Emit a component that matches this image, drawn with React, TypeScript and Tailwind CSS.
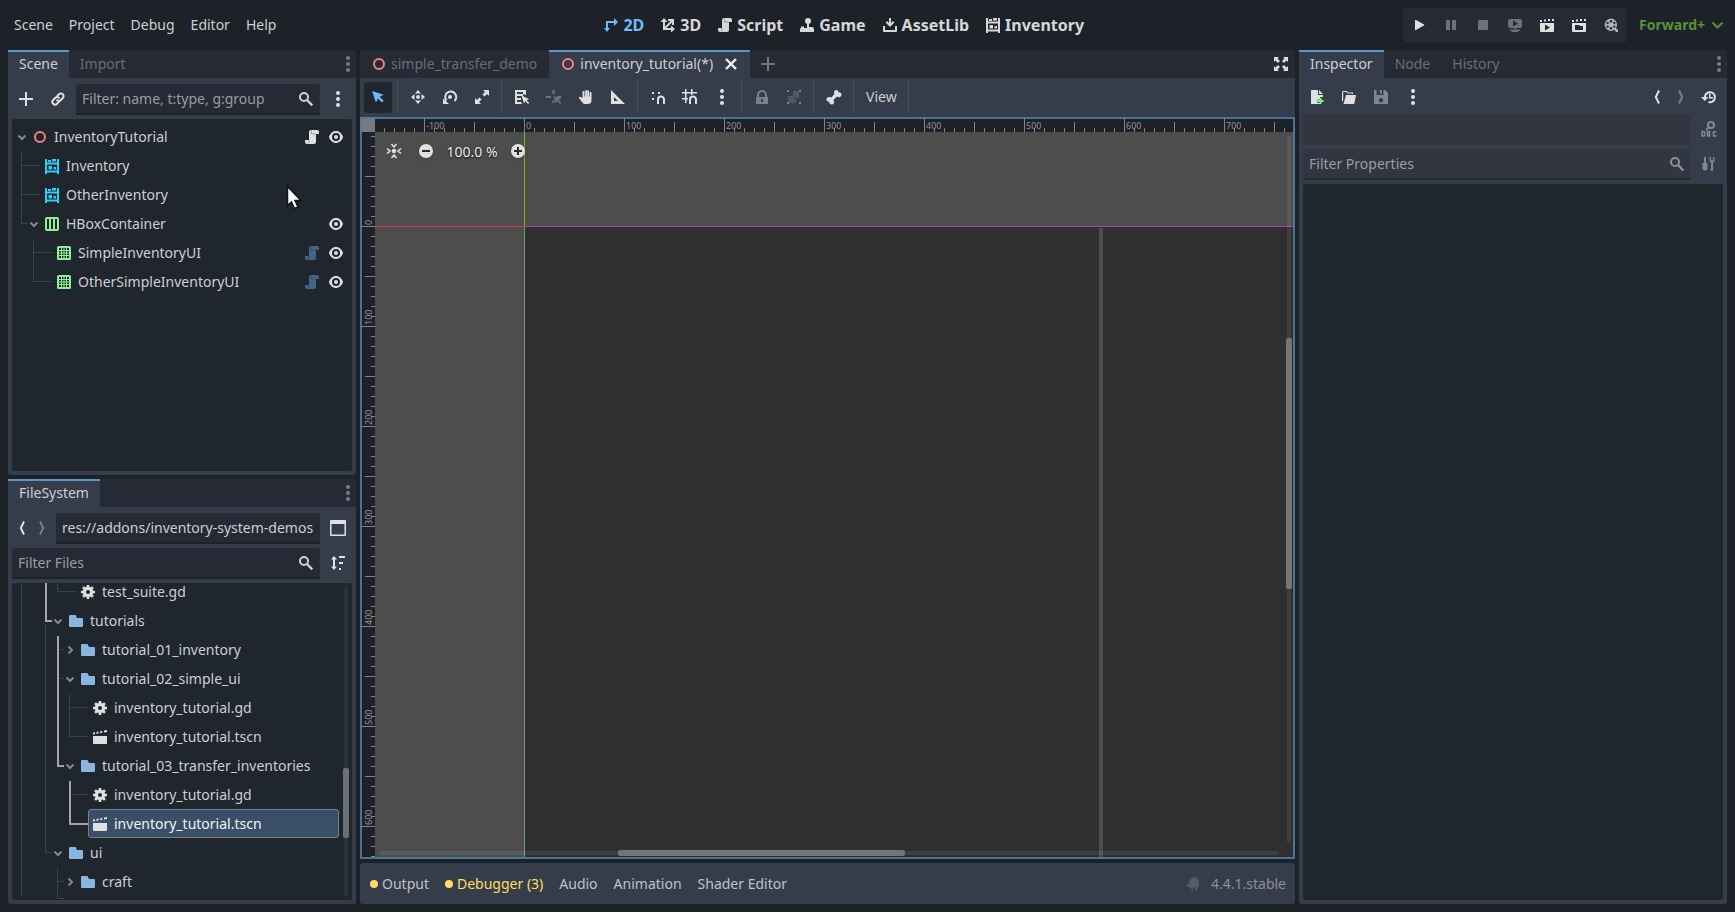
import { useEffect, useRef, useState } from "react";
import clsx from "clsx";

type IconProps = { className?: string };

type SvgProps = IconProps & { children: React.ReactNode };

function Svg({ className = "text-[#e0e0e0]", children }: SvgProps) {
  return (
    <svg
      width="16"
      height="16"
      viewBox="0 0 16 16"
      fill="currentColor"
      className={clsx("shrink-0", className)}
      aria-hidden
    >
      {children}
    </svg>
  );
}

/* ---------- icons ---------- */

const DotsIcon = (p: IconProps) => (
  <Svg {...p}>
    <circle cx="8" cy="2" r="2" />
    <circle cx="8" cy="8" r="2" />
    <circle cx="8" cy="14" r="2" />
  </Svg>
);

const PlusIcon = (p: IconProps) => (
  <Svg {...p}>
    <path d="M7 1h2v6h6v2H9v6H7V9H1V7h6z" />
  </Svg>
);

const LinkIcon = (p: IconProps) => (
  <Svg {...p}>
    <g fill="none" stroke="currentColor" strokeWidth="2" strokeLinecap="round">
      <path d="M7.2 5.2 9 3.2a2.6 2.6 0 0 1 3.8 3.8L10.6 9.2a2.5 2.5 0 0 1-3.4 0" />
      <path d="M8.8 10.8 7 12.8A2.6 2.6 0 0 1 3.2 9l2.2-2.2a2.5 2.5 0 0 1 3.4 0" />
    </g>
  </Svg>
);

const SearchIcon = (p: IconProps) => (
  <Svg {...p}>
    <g fill="none" stroke="currentColor" strokeWidth="2">
      <circle cx="6" cy="6" r="4" />
      <path d="m9 9 5.3 5.3" strokeWidth="2.4" />
    </g>
  </Svg>
);

const ArrowDownIcon = (p: IconProps) => (
  <Svg {...p}>
    <path d="m4.5 6.5 3.5 3.5 3.5-3.5" fill="none" stroke="currentColor" strokeWidth="2" />
  </Svg>
);

const ArrowRightIcon = (p: IconProps) => (
  <Svg {...p}>
    <path d="M6.5 4.5 10 8l-3.500 3.500" fill="none" stroke="currentColor" strokeWidth="2" />
  </Svg>
);

const NodeIcon = () => (
  <Svg className="text-[#fc7f7f]">
    <circle cx="8" cy="8" r="5" fill="none" stroke="currentColor" strokeWidth="2" />
  </Svg>
);

const ScriptIcon = (p: IconProps) => (
  <Svg {...p}>
    <path d="M7 1a2 2 0 0 0-2 2v8H1v2a2 2 0 0 0 2 2h7a2 2 0 0 0 2-2V5h3V3a2 2 0 0 0-2-2z" />
    <path
      d="M7.500 1.500v3.500H12M5 11v2a1 1 0 0 1-1 1"
      fill="none"
      stroke="#20262d"
      strokeOpacity=".35"
      strokeWidth="1"
    />
  </Svg>
);

const EyeIcon = (p: IconProps) => (
  <Svg {...p}>
    <path d="M8 2C5.443 2 2.209 3.948 1.045 7.705a1 1 0 0 0-.006.57C2.163 12.022 5.481 14 8 14s5.837-1.978 6.961-5.725a1 1 0 0 0 0-.55C13.861 3.935 10.557 2 8 2zm0 2a4 4 0 0 1 0 8 4 4 0 0 1 0-8zm0 2a2 2 0 0 0 0 4 2 2 0 0 0 0-4z" />
  </Svg>
);

const ShelfIcon = (p: IconProps) => (
  <Svg {...p}>
    <path d="M1 1h2v3.5h10V1h2v15h-2v-1.5H3V16H1zm2 5.5v6h10v-6z" fillRule="evenodd" />
    <path d="M4 2h3v2H4zM8 1h4v2.5H8zM4.5 8H8v3.5H4.5zM9.5 9H12v2.5H9.5z" />
  </Svg>
);

const HBoxIcon = () => (
  <Svg className="text-[#8eef97]">
    <path
      fillRule="evenodd"
      d="M3 1a2 2 0 0 0-2 2v10a2 2 0 0 0 2 2h10a2 2 0 0 0 2-2V3a2 2 0 0 0-2-2zm0 2h2v10H3zm4 0h2v10H7zm4 0h2v10h-2z"
    />
  </Svg>
);

const GridIcon = () => (
  <Svg className="text-[#8eef97]">
    <rect x="1" y="1" width="14" height="14" rx="1.5" />
    <rect x="3" y="3" width="10" height="10" fill="#20262d" />
    <path d="M5 3h1v10H5zM7.500 3h1v10h-1zM10 3h1v10h-1zM3 5h10v1H3zM3 7.500h10v1H3zM3 10h10v1H3z" />
  </Svg>
);

const FolderIcon = () => (
  <Svg className="text-[#8ab5df]">
    <path d="M1 3a1 1 0 0 1 1-1h5a1 1 0 0 1 1 1l1 2h5a1 1 0 0 1 1 1v7a1 1 0 0 1-1 1H2a1 1 0 0 1-1-1z" />
  </Svg>
);

const GearIcon = () => (
  <Svg>
    {[0, 45, 90, 135].map((a) => (
      <path key={a} d="M6.8 1h2.400l.4 3v8l-.4 3H6.800l-.4-3V4z" transform={`rotate(${a} 8 8)`} />
    ))}
    <circle cx="8" cy="8" r="5" />
    <circle cx="8" cy="8" r="2" fill="#20262d" />
  </Svg>
);

const SceneIcon = () => (
  <Svg>
    <path d="M1 3.600 3 3.200v2L1 5.600zM4.500 2.900l2-.4v2l-2 .4zM8.200 2.200l2-.4v2l-2 .4zM12 1.500l3-.5v2l-3 .6z" />
    <path d="M1 7h14v7a1 1 0 0 1-1 1H2a1 1 0 0 1-1-1z" />
  </Svg>
);

const PlaySceneIcon = () => (
  <Svg>
    <path d="M1 3h2v2H1zM5 2.500h2v2H5zM9 2h2v2H9zM13 2h2v2h-2z" />
    <path fillRule="evenodd" d="M1 6h14v8a1 1 0 0 1-1 1H2a1 1 0 0 1-1-1zm5 1.500v6l5-3z" />
  </Svg>
);

const PlayCustomIcon = () => (
  <Svg>
    <path d="M1 3h2v2H1zM5 2.500h2v2H5zM9 2h2v2H9zM13 2h2v2h-2z" />
    <path fillRule="evenodd" d="M1 6h14v8a1 1 0 0 1-1 1H2a1 1 0 0 1-1-1zm3 2v5h8V9H9L8 8z" />
  </Svg>
);

const PlayIcon = () => (
  <Svg>
    <path d="M4 3.500v9.200a.6.6 0 0 0 1 .3l8-4.400a.6.6 0 0 0 0-1L5 3a.6.6 0 0 0-1 .5z" />
  </Svg>
);

const PauseIcon = (p: IconProps) => (
  <Svg {...p}>
    <path d="M3 3h4v10H3zM9 3h4v10H9z" />
  </Svg>
);

const StopIcon = (p: IconProps) => (
  <Svg {...p}>
    <rect x="3" y="3" width="10" height="10" rx="1" />
  </Svg>
);

const RemoteIcon = (p: IconProps) => (
  <Svg {...p}>
    <path
      fillRule="evenodd"
      d="M3 2a2 2 0 0 0-2 2v5a2 2 0 0 0 2 2h10a2 2 0 0 0 2-2V4a2 2 0 0 0-2-2zm3 1.500v6l5-3z"
    />
    <path d="M7 11h2v1H7zM3 12.500h10V14H3zM5 14h6v1H5z" />
  </Svg>
);

const MovieIcon = (p: IconProps) => (
  <Svg {...p}>
    <path
      fillRule="evenodd"
      d="M8 1.500a6.200 6.200 0 1 0 3.500 11.300L13 15h2v-2l-2-2A6.200 6.200 0 0 0 8 1.500z"
    />
    <g fill="#262a34">
      <circle cx="8" cy="4.200" r="1.300" />
      <circle cx="8" cy="11.200" r="1.300" />
      <circle cx="4.600" cy="6" r="1.200" />
      <circle cx="11.300" cy="6" r="1.200" />
      <circle cx="4.600" cy="9.600" r="1.200" />
      <circle cx="11.300" cy="9.600" r="1.200" />
    </g>
  </Svg>
);

const View2DIcon = (p: IconProps) => (
  <Svg {...p}>
    <path d="M3 4h8V1l4 4-4 4V6H5v5h2l-3 4-3-4h2z" />
  </Svg>
);

const View3DIcon = (p: IconProps) => (
  <Svg {...p}>
    <path d="m4 1 3.500 4H5v4.600L10.600 4H8V2h6v6h-2V5.400L6.400 11H11V8.500l4 3.500-4 3.500V13H3V5H.5z" />
  </Svg>
);

const GameIcon = (p: IconProps) => (
  <Svg {...p}>
    <circle cx="9" cy="4" r="3" />
    <path d="M8 6h2v4h3a2 2 0 0 1 2 2v3H1v-3a1 1 0 0 1 1-1V9.500h3V11h3z" />
  </Svg>
);

const AssetLibIcon = (p: IconProps) => (
  <Svg {...p}>
    <path d="M7 1h2v5l2-2 1.400 1.400L8 10 3.600 5.400 5 4l2 2zM1 9h2v4h10V9h2v5a1 1 0 0 1-1 1H2a1 1 0 0 1-1-1z" />
  </Svg>
);

const SelectIcon = (p: IconProps) => (
  <Svg {...p}>
    <path d="m2 2 4 11.500 2-4 4 4 1.700-1.700-4-4 4-2z" />
  </Svg>
);

const MoveIcon = () => (
  <Svg>
    <circle cx="8" cy="8" r="2" />
    <path d="m8 1 3 3.500H5zM8 15l3-3.500H5zM1 8l3.500-3v6zM15 8l-3.500-3v6z" />
  </Svg>
);

const RotateIcon = () => (
  <Svg>
    <path d="M4.500 11.500A5.500 5.500 0 1 1 12.500 12" fill="none" stroke="currentColor" strokeWidth="2" />
    <circle cx="8" cy="8" r="2" />
    <path d="M1 9.500V15h6z" />
  </Svg>
);

const ScaleIcon = () => (
  <Svg>
    <path d="M9 1h6v6l-2-2-2.500 2.500-2-2L11 3zM7 15H1V9l2 2 2.500-2.500 2 2L5 13z" />
  </Svg>
);

const ListSelectIcon = () => (
  <Svg>
    <path fillRule="evenodd" d="M1 1h11v5l-3-1V3H3v2h6v2H3v2h4v2H3v2h4l1 2H1z" />
    <path d="m7.500 6.500 2.500 8 1.500-2.500 2.500 3 1.300-1.300-2.800-2.500 2.500-1.200z" />
  </Svg>
);

const PivotIcon = (p: IconProps) => (
  <Svg {...p}>
    <path d="M6.500 1h2v4h-2zM0 7h5v2H0zM11 7h4v2h-4zM6.500 11h2v3h-2z" />
    <path d="m7.500 7 2.500 7.500 1.500-2.500 2.500 3 1.300-1.300-2.800-2.500 2.500-1.200z" />
  </Svg>
);

const PanIcon = () => (
  <Svg>
    <path d="M8.200 1c-.6 0-1 .4-1 1v5.500h-.7V3c0-1.300-2-1.300-2 0v6.300L2.800 8C1.800 7.200.4 8.500 1.300 9.600L5 14.200c.5.5 1 .8 2 .8h3c2 0 3.500-1.500 3.500-3.500V4c0-1.300-2-1.300-2 0v3.500h-.5V2.300c0-1.400-1.800-1.400-1.800 0v5.200h-.2V2c0-.6-.3-1-.8-1z" />
  </Svg>
);

const RulerIcon = () => (
  <Svg>
    <path fillRule="evenodd" d="M1 1v14h14zm3 7 4 4H4z" />
  </Svg>
);

const Magnet = () => (
  <path d="M8 15v-4.500a3 3 0 0 1 6 0V15" fill="none" stroke="currentColor" strokeWidth="2" />
);

const SmartSnapIcon = () => (
  <Svg>
    <path d="M2 3h2v2H2zM8 3h2v2H8zM2 9h2v2H2z" />
    <Magnet />
  </Svg>
);

const GridSnapIcon = () => (
  <Svg>
    <path d="M3 0h1.500v3H9V0h1.500v3H15v1.500h-4.500V6H9V4.500H4.500V9H6v1.500H4.500V14H3v-3.500H0V9h3V4.500H0V3h3z" />
    <Magnet />
  </Svg>
);

const LockIcon = (p: IconProps) => (
  <Svg {...p}>
    <path
      fillRule="evenodd"
      d="M8 1a5 5 0 0 0-5 5v2H2v7h12V8h-1V6a5 5 0 0 0-5-5zm0 2a3 3 0 0 1 3 3v2H5V6a3 3 0 0 1 3-3zM7 10h2v3H7z"
    />
  </Svg>
);

const GroupIcon = (p: IconProps) => (
  <Svg {...p}>
    <path d="M1 1h2v2H1zM13 1h2v2h-2zM1 13h2v2H1zM13 13h2v2h-2z" />
    <path d="M7 2h6v7H9V7H7zM2 7h6v3h2v4H2z" opacity=".4" />
  </Svg>
);

const BoneIcon = () => (
  <Svg>
    <path d="M10.500 1a2.400 2.400 0 0 0-2.300 3.200L8.300 5.300 5.300 8.400l-1.200-.1a2.400 2.400 0 1 0-.8 4.400 2.400 2.400 0 1 0 4.400-.8l-.1-1.200 3.100-3 1.100.1a2.400 2.400 0 1 0 .8-4.400A2.400 2.400 0 0 0 10.500 1z" />
  </Svg>
);

const ExpandIcon = () => (
  <Svg>
    <path d="M1 1h5L4.500 2.500l2.500 2.500-2 2-2.500-2.500L1 6zM15 1v5l-1.500-1.500L11 7 9 5l2.500-2.500L10 1zM1 15v-5l1.500 1.500L5 9l2 2-2.500 2.500L6 15zM15 15h-5l1.500-1.500L9 11l2-2 2.500 2.500L15 10z" />
  </Svg>
);

const CloseIcon = () => (
  <Svg className="text-[#f2f2f2]">
    <path d="m3 3 10 10M13 3 3 13" stroke="currentColor" strokeWidth="2.400" />
  </Svg>
);

const BackIcon = (p: IconProps) => (
  <Svg {...p}>
    <path d="M10 1.500 6.800 8l3.200 6.500" fill="none" stroke="currentColor" strokeWidth="2" />
  </Svg>
);

const ForwardIcon = (p: IconProps) => (
  <Svg {...p}>
    <path d="M6 1.500 9.200 8 6 14.500" fill="none" stroke="currentColor" strokeWidth="2" />
  </Svg>
);

const PanelIcon = () => (
  <Svg>
    <path
      fillRule="evenodd"
      d="M1 0h14a1 1 0 0 1 1 1v14a1 1 0 0 1-1 1H1a1 1 0 0 1-1-1V1a1 1 0 0 1 1-1zm.5 4v10.500h13V4z"
    />
  </Svg>
);

const SortIcon = () => (
  <Svg>
    <path d="m4 1 3 3.500H5v7h2L4 15l-3-3.500h2v-7H1zM9 1h6v2H9zM9 7h4v2H9zM9 13h2v2H9z" />
  </Svg>
);

const NewResourceIcon = () => (
  <Svg>
    <path d="M2 1h7v5h5v2h-3v2.500H8.500v3.500H11v1H2z" />
    <path d="M10 1v4h4z" />
    <path d="M10.500 9h2v2h2v2h-2v2h-2v-2h-2v-2h2z" fill="#7df580" />
  </Svg>
);

const OpenFolderIcon = () => (
  <Svg>
    <path d="M2 2h4l1 1.500h5V5h-1V4.500H6.500l-1-1.500H2.200v8L1 13V3z" />
    <path d="M5 6h10l-1.500 8a1 1 0 0 1-1 1H2.500z" />
  </Svg>
);

const SaveIcon = (p: IconProps) => (
  <Svg {...p}>
    <path
      fillRule="evenodd"
      d="M2 1a1 1 0 0 0-1 1v12a1 1 0 0 0 1 1h12a1 1 0 0 0 1-1V4l-3-3zm1.500 0v5h7V1H9v3.500H7V1zM8 9a2.200 2.200 0 0 0 0 4.400A2.200 2.200 0 0 0 8 9z"
    />
  </Svg>
);

const HistoryIcon = () => (
  <Svg>
    <path d="M4 10V7.500a5 5 0 1 1 3.500 5.500" fill="none" stroke="currentColor" strokeWidth="2" />
    <path d="M0 8h7.500L3.800 12zM8 4.500h1.500V8H12v1.500H8z" />
  </Svg>
);

const DocIcon = (p: IconProps) => (
  <Svg {...p}>
    <g fill="none" stroke="currentColor">
      <circle cx="10" cy="4" r="3" strokeWidth="2" />
      <path d="M7.800 6.200 5 9" strokeWidth="2" />
      <path
        d="M1 10.500V15h1.200a1.500 1.500 0 0 0 1.500-1.500V12a1.500 1.500 0 0 0-1.500-1.500zM6.500 10.500h2V15h-2zM15.500 10.800h-3V15h3"
        strokeWidth="1.600"
      />
    </g>
  </Svg>
);

const ToolsIcon = (p: IconProps) => (
  <Svg {...p}>
    <path d="M3 1h2v6h1.500v5a2.500 2.500 0 0 1-5 0V7H3zM9 1h1v3.500h2V1h1.500v3.500a3 3 0 0 1-1.500 2.300V15h-2V6.800A3 3 0 0 1 8.500 4.500V1z" />
  </Svg>
);

const BellIcon = (p: IconProps) => (
  <Svg {...p}>
    <path d="M9 1a5 5 0 0 0-4 3L3.500 8 1 9.500l4 2.500 9-.5V9l-.5-5A5 5 0 0 0 9 1zM6 12.500l.5 2h1.500l.5-2zM10 12l.5 2h1.500l.5-2z" />
  </Svg>
);

const CenterIcon = () => (
  <Svg>
    <circle cx="8" cy="8" r="2.200" />
    <g fill="none" stroke="currentColor" strokeWidth="1.600">
      <path d="M5.500 1 8 4l2.500-3M5.500 15 8 12l2.500 3M1 5.500 4 8l-3 2.500M15 5.500 12 8l3 2.500" />
    </g>
  </Svg>
);

function ZoomIcon({ plus }: { plus?: boolean }) {
  return (
    <Svg className="text-[#e0e0e0] drop-shadow-sm">
      <circle cx="8" cy="8" r="7" />
      <path d={plus ? "M7 4h2v3h3v2H9v3H7V9H4V7h3z" : "M4 7h8v2H4z"} fill="#2b2b2b" />
    </Svg>
  );
}

/* ---------- shared bits ---------- */

type IconButtonProps = {
  label: string;
  active?: boolean;
  className?: string;
  children: React.ReactNode;
};

function IconButton({ label, active, className = "w-7", children }: IconButtonProps) {
  return (
    <button
      type="button"
      aria-label={label}
      className={clsx(
        "flex h-[31px] shrink-0 items-center justify-center rounded-[3px] pb-px",
        className,
        active && "bg-[#21262e]",
      )}
    >
      {children}
    </button>
  );
}

type TabProps = { label: string; active?: boolean; onClick?: () => void };

function DockTab({ label, active, onClick }: TabProps) {
  return (
    <button
      type="button"
      role="tab"
      aria-selected={!!active}
      onClick={onClick}
      className={clsx(
        "h-7 border-t-2 px-[11px] pb-0.5",
        active ? "border-[#5a94c8] bg-[#363d4a] text-[#cdcfd2]" : "border-transparent text-[#6b6e75]",
      )}
    >
      {label}
    </button>
  );
}

function DockTabs({ tabs }: { tabs: string[] }) {
  const [current, setCurrent] = useState(tabs[0]);
  return (
    <div role="tablist" className="flex h-7 shrink-0 rounded-t-[3px] bg-[#262a34]">
      {tabs.map((tab) => (
        <DockTab key={tab} label={tab} active={tab === current} onClick={() => setCurrent(tab)} />
      ))}
      <button type="button" aria-label="Dock options" className="ml-auto w-4">
        <DotsIcon className="text-[#7b7d82]" />
      </button>
    </div>
  );
}

type FieldProps = {
  label: string;
  value?: string;
  placeholder?: string;
  search?: boolean;
  muted?: boolean;
  disabled?: boolean;
};

function Field({ label, value, placeholder, search, muted, disabled }: FieldProps) {
  return (
    <label
      className={clsx(
        "flex h-[31px] min-w-0 flex-1 items-center rounded-t-[3px] px-1.5",
        muted ? "bg-[#313641]" : "bg-[#262a34]",
        disabled ? "rounded-b-[3px]" : muted ? "border-b-2 border-[#262a34]" : "border-b-2 border-[#1d2229]",
      )}
    >
      <input
        type="text"
        aria-label={label}
        defaultValue={value}
        placeholder={placeholder}
        disabled={disabled}
        className="w-full min-w-0 bg-transparent text-[#cdcfd2] outline-none placeholder:text-[#9a9da3]"
      />
      {search && <SearchIcon className={muted ? "text-[#8e9197]" : "text-[#d0d1d3]"} />}
    </label>
  );
}

/* ---------- top bar ---------- */

const menus = ["Scene", "Project", "Debug", "Editor", "Help"];

const screens = [
  { label: "2D", icon: View2DIcon },
  { label: "3D", icon: View3DIcon },
  { label: "Script", icon: ScriptIcon },
  { label: "Game", icon: GameIcon },
  { label: "AssetLib", icon: AssetLibIcon },
  { label: "Inventory", icon: ShelfIcon },
];

function TopBar() {
  const [screen, setScreen] = useState("2D");
  return (
    <header className="flex h-[50px] shrink-0 items-center justify-between pr-2.5 pl-1.5">
      <nav className="flex" aria-label="Main menu">
        {menus.map((menu) => (
          <button key={menu} type="button" className="px-2 text-[#cdcfd2]">
            {menu}
          </button>
        ))}
      </nav>
      <div className="flex">
        {screens.map(({ label, icon: Icon }) => {
          const color = screen === label ? "text-[#70bafa]" : "text-[#d6d7d9]";
          return (
            <button
              key={label}
              type="button"
              onClick={() => setScreen(label)}
              className={clsx("flex items-center gap-1 px-2 text-base font-bold", color)}
            >
              <Icon className={color} />
              {label}
            </button>
          );
        })}
      </div>
      <div className="flex items-center">
        <div className="flex h-[34px] items-center gap-1 rounded-[3px] bg-[#262a34] px-0.5">
          <IconButton label="Run project"><PlayIcon /></IconButton>
          <IconButton label="Pause"><PauseIcon className="text-[#6e7177]" /></IconButton>
          <IconButton label="Stop"><StopIcon className="text-[#6e7177]" /></IconButton>
          <IconButton label="Remote deploy"><RemoteIcon className="text-[#6e7177]" /></IconButton>
          <IconButton label="Run current scene"><PlaySceneIcon /></IconButton>
          <IconButton label="Run specific scene"><PlayCustomIcon /></IconButton>
          <IconButton label="Movie maker"><MovieIcon className="text-[#b4b6b9]" /></IconButton>
        </div>
        <button type="button" className="flex items-center gap-1 pl-3 font-bold text-[#5b8f3d]">
          Forward+
          <svg width="16" height="16" viewBox="0 0 16 16" fill="none" stroke="currentColor" strokeWidth="2" aria-hidden>
            <path d="m3.500 5.500 5 5 5-5" />
          </svg>
        </button>
      </div>
    </header>
  );
}

/* ---------- scene dock ---------- */

type SceneNode = {
  name: string;
  icon: React.ReactNode;
  indent: string;
  arrow?: boolean;
  script?: string;
  eye?: boolean;
};

const sceneNodes: SceneNode[] = [
  { name: "InventoryTutorial", icon: <NodeIcon />, indent: "pl-[2px]", arrow: true, script: "text-[#e0e0e0]", eye: true },
  { name: "Inventory", icon: <ShelfIcon className="text-[#2fd0f5]" />, indent: "pl-[14px]" },
  { name: "OtherInventory", icon: <ShelfIcon className="text-[#2fd0f5]" />, indent: "pl-[14px]" },
  { name: "HBoxContainer", icon: <HBoxIcon />, indent: "pl-[14px]", arrow: true, eye: true },
  { name: "SimpleInventoryUI", icon: <GridIcon />, indent: "pl-[26px]", script: "text-[#42658a]", eye: true },
  { name: "OtherSimpleInventoryUI", icon: <GridIcon />, indent: "pl-[26px]", script: "text-[#42658a]", eye: true },
];

function SceneDock() {
  return (
    <section className="flex min-h-0 flex-1 flex-col rounded-[3px] bg-[#363d4a]">
      <DockTabs tabs={["Scene", "Import"]} />
      <div className="flex min-h-0 flex-1 flex-col gap-1 px-1 pt-1.5 pb-1">
        <div className="flex gap-1">
          <IconButton label="Add node"><PlusIcon /></IconButton>
          <IconButton label="Instantiate scene"><LinkIcon /></IconButton>
          <Field label="Filter nodes" placeholder="Filter: name, t:type, g:group" search />
          <IconButton label="More options"><DotsIcon /></IconButton>
        </div>
        <div className="relative min-h-0 flex-1 overflow-hidden rounded-[3px] bg-[#20262d] py-[3px]">
          <svg className="absolute top-0 left-0" width="60" height="180" fill="none" stroke="#3d4249" aria-hidden>
            <path d="M9.500 33v71.500M9.500 46.500H28M9.500 75.500H28M9 104.500h7" />
            <path d="M21.500 120v42.500M21.500 133.500H40M21 162.500h19" />
          </svg>
          <ul>
            {sceneNodes.map((node) => (
              <li key={node.name} className={clsx("flex h-[29px] items-center pr-2", node.indent)}>
                <span className="flex w-[18px] shrink-0">
                  {node.arrow && <ArrowDownIcon className="text-[#86898e]" />}
                </span>
                {node.icon}
                <span className="ml-1.5 flex-1 text-[#cdcfd2]">{node.name}</span>
                {node.script && (
                  <button type="button" aria-label={`Open script of ${node.name}`}>
                    <ScriptIcon className={node.script} />
                  </button>
                )}
                {node.eye && (
                  <button type="button" aria-label={`Toggle visibility of ${node.name}`} className="ml-2">
                    <EyeIcon />
                  </button>
                )}
              </li>
            ))}
          </ul>
          <svg className="absolute top-[66px] left-[274px]" width="18" height="26" viewBox="0 0 18 26" aria-hidden>
            <path
              d="M1.500 1.500v19l4-3.500 3 6.500 3.500-1.500-3-6.500h6z"
              fill="#fff"
              stroke="#11141c"
              strokeWidth="1.500"
            />
          </svg>
        </div>
      </div>
    </section>
  );
}

/* ---------- filesystem dock ---------- */

type FileRow = {
  name: string;
  kind: "folder" | "script" | "scene";
  indent: string;
  open?: boolean;
  selected?: boolean;
};

const files: FileRow[] = [
  { name: "test_suite.gd", kind: "script", indent: "pl-[50px]" },
  { name: "tutorials", kind: "folder", indent: "pl-[38px]", open: true },
  { name: "tutorial_01_inventory", kind: "folder", indent: "pl-[50px]", open: false },
  { name: "tutorial_02_simple_ui", kind: "folder", indent: "pl-[50px]", open: true },
  { name: "inventory_tutorial.gd", kind: "script", indent: "pl-[62px]" },
  { name: "inventory_tutorial.tscn", kind: "scene", indent: "pl-[62px]" },
  { name: "tutorial_03_transfer_inventories", kind: "folder", indent: "pl-[50px]", open: true },
  { name: "inventory_tutorial.gd", kind: "script", indent: "pl-[62px]" },
  { name: "inventory_tutorial.tscn", kind: "scene", indent: "pl-[58px]", selected: true },
  { name: "ui", kind: "folder", indent: "pl-[38px]", open: true },
  { name: "craft", kind: "folder", indent: "pl-[50px]", open: false },
];

const fileIcons = {
  folder: <FolderIcon />,
  script: <GearIcon />,
  scene: <SceneIcon />,
};

function FileTree() {
  return (
    <div className="relative min-h-0 flex-1 overflow-hidden rounded-[3px] bg-[#20262d]">
      <svg className="absolute top-0 left-0" width="90" height="316" fill="none" aria-hidden>
        <g stroke="#3d4249">
          <path d="M9.500 0v313M33.500 41v228.500h6.500M45.500 0v8.500H64" />
          <path d="M49 66.500h3M49 95.500h3M57.500 111v42.500H76M57.500 124.500H76M61 211.500h15" />
          <path d="M45.500 285v30.500H52M45.500 298.500H52" />
        </g>
        <g stroke="#a3a5a8" strokeWidth="2">
          <path d="M34 0v38h6M46 53v130h6M58 198v43h18" />
        </g>
      </svg>
      <ul className="-mt-1.5">
        {files.map((file, i) => (
          <li key={i} className={clsx("flex h-[29px] items-center pr-[13px]", file.indent)}>
            <span className="flex w-[18px] shrink-0">
              {file.open === true && <ArrowDownIcon className="text-[#86898e]" />}
              {file.open === false && <ArrowRightIcon className="text-[#86898e]" />}
            </span>
            <span
              className={clsx(
                "flex flex-1 items-center gap-1.5",
                file.selected
                  ? "h-[29px] rounded-[3px] border border-[#7a808a] bg-[#394f67] pl-[3px] text-[#f0f1f2]"
                  : "text-[#cdcfd2]",
              )}
            >
              {fileIcons[file.kind]}
              {file.name}
            </span>
          </li>
        ))}
      </ul>
      <div className="absolute inset-y-1 right-1 w-1 rounded-full bg-[#2d3239]" />
      <div className="absolute top-[185px] right-[3px] h-[70px] w-1.5 rounded-[2px] bg-[#6b6f76]" />
    </div>
  );
}

function FileSystemDock() {
  return (
    <section className="flex min-h-0 flex-1 flex-col rounded-[3px] bg-[#363d4a]">
      <DockTabs tabs={["FileSystem"]} />
      <div className="flex min-h-0 flex-1 flex-col gap-1 px-1 pt-1.5 pb-1">
        <div className="flex">
          <IconButton label="Previous folder" className="w-5"><BackIcon /></IconButton>
          <IconButton label="Next folder" className="mr-1 w-5"><ForwardIcon className="text-[#7b7f87]" /></IconButton>
          <Field label="Path" value="res://addons/inventory-system-demos" />
          <IconButton label="Change split mode" className="ml-1 w-7"><PanelIcon /></IconButton>
        </div>
        <div className="flex gap-1">
          <Field label="Filter files" placeholder="Filter Files" search />
          <IconButton label="Sort files"><SortIcon /></IconButton>
        </div>
        <FileTree />
      </div>
    </section>
  );
}

/* ---------- 2D viewport ---------- */

const ORIGIN_X = 149;
const ORIGIN_Y = 94;

// every 10 units that fall inside a ruler of the given length
function ticks(origin: number, length: number) {
  const out: number[] = [];
  for (let n = -Math.floor(origin / 10) * 10; n + origin < length; n += 10) out.push(n);
  return out;
}

function tickLength(n: number) {
  if (n % 100 === 0) return 15;
  return n % 50 === 0 ? 10 : 4;
}

function useSize() {
  const ref = useRef<HTMLDivElement>(null);
  const [size, setSize] = useState({ width: 0, height: 0 });

  useEffect(() => {
    const el = ref.current;
    if (!el) return;
    const update = () => setSize({ width: el.clientWidth, height: el.clientHeight });
    update();
    const observer = new ResizeObserver(update);
    observer.observe(el);
    return () => observer.disconnect();
  }, []);

  return { ref, size };
}

function HorizontalRuler({ length }: { length: number }) {
  return (
    <svg className="h-[15px] w-full bg-[#1d2229]" fill="#80848b" aria-hidden>
      {ticks(ORIGIN_X, length).map((n) => (
        <g key={n}>
          <rect x={n + ORIGIN_X} y={15 - tickLength(n)} width="1" height={tickLength(n)} />
          {n % 100 === 0 && (
            <text x={n + ORIGIN_X + 2} y="12" fontSize="9" fill="#8f9298">
              {n}
            </text>
          )}
        </g>
      ))}
    </svg>
  );
}

function VerticalRuler({ length }: { length: number }) {
  return (
    <svg className="h-full w-[15px] bg-[#1d2229]" fill="#80848b" aria-hidden>
      {ticks(ORIGIN_Y, length).map((n) => (
        <g key={n}>
          <rect x={15 - tickLength(n)} y={n + ORIGIN_Y} width={tickLength(n)} height="1" />
          {n % 100 === 0 && (
            <text transform={`translate(12 ${n + ORIGIN_Y - 1}) rotate(-90)`} fontSize="9" fill="#8f9298">
              {n}
            </text>
          )}
        </g>
      ))}
    </svg>
  );
}

function Viewport() {
  const { ref, size } = useSize();
  return (
    <div className="relative grid min-h-0 flex-1 grid-cols-[15px_minmax(0,1fr)] grid-rows-[15px_minmax(0,1fr)]">
      <div className="bg-[#777a83]" />
      <HorizontalRuler length={size.width} />
      <div className="relative overflow-hidden bg-[#1d2229]">
        <div className="absolute inset-0">
          <VerticalRuler length={size.height} />
        </div>
      </div>
      <div ref={ref} className="relative overflow-hidden bg-[#4d4d4d]">
        <div className="absolute top-[95px] right-0 bottom-0 left-[150px] bg-[#2f2f2f]" />
        <div className="absolute top-[96px] bottom-0 left-[724px] w-1 bg-[#4d4d4d]" />
        <div className="absolute top-0 left-[149px] h-[94px] w-px bg-[#80b01c]" />
        <div className="absolute top-[95px] bottom-0 left-[149px] w-px bg-[#6f9a74]" />
        <div className="absolute top-[94px] left-0 h-px w-[149px] bg-[#dc3550]" />
        <div className="absolute top-[94px] right-0 left-[149px] h-px bg-[#ac429e]" />
        <div className="absolute top-1 left-[5px] flex items-center">
          <IconButton label="Center view"><CenterIcon /></IconButton>
          <IconButton label="Zoom out" className="ml-1 w-7"><ZoomIcon /></IconButton>
          <button
            type="button"
            className="w-16 text-center text-[#ebebeb] [text-shadow:0_0_2px_#222,0_1px_2px_#222]"
          >
            100.0 %
          </button>
          <IconButton label="Zoom in"><ZoomIcon plus /></IconButton>
        </div>
        <div className="absolute top-1 right-1 bottom-4 w-1 rounded-full bg-white/8" />
        <div className="absolute top-[206px] right-[3px] h-[251px] w-1.5 rounded-[2px] bg-[#757575]" />
        <div className="absolute right-4 bottom-1 left-1 h-1 rounded-full bg-white/8" />
        <div className="absolute bottom-[3px] left-[243px] h-1.5 w-[287px] rounded-[2px] bg-[#757575]" />
      </div>
      <div className="pointer-events-none absolute inset-0 border-2 border-[#4f7ba3]/90" />
    </div>
  );
}

const Separator = () => <div className="mx-px h-[31px] w-0.5 shrink-0 border-l border-[#4a505c]" />;

function ViewportToolbar() {
  return (
    <div className="flex h-[39px] shrink-0 gap-1 bg-[#363d4a] p-1">
      <IconButton label="Select mode" active><SelectIcon className="text-[#70bafa]" /></IconButton>
      <Separator />
      <IconButton label="Move mode"><MoveIcon /></IconButton>
      <IconButton label="Rotate mode"><RotateIcon /></IconButton>
      <IconButton label="Scale mode"><ScaleIcon /></IconButton>
      <Separator />
      <IconButton label="List selectable nodes"><ListSelectIcon /></IconButton>
      <IconButton label="Change pivot"><PivotIcon className="text-[#70747d]" /></IconButton>
      <IconButton label="Pan mode"><PanIcon /></IconButton>
      <IconButton label="Ruler mode"><RulerIcon /></IconButton>
      <Separator />
      <IconButton label="Smart snap"><SmartSnapIcon /></IconButton>
      <IconButton label="Grid snap"><GridSnapIcon /></IconButton>
      <IconButton label="Snapping options"><DotsIcon /></IconButton>
      <Separator />
      <IconButton label="Lock"><LockIcon className="text-[#7b7f87]" /></IconButton>
      <IconButton label="Group"><GroupIcon className="text-[#7b7f87]" /></IconButton>
      <Separator />
      <IconButton label="Skeleton options"><BoneIcon /></IconButton>
      <Separator />
      <button type="button" className="h-[31px] px-1.5 pb-0.5 text-[#cdcfd2]">View</button>
      <Separator />
    </div>
  );
}

function SceneTabs() {
  return (
    <div className="flex h-7 shrink-0 items-center rounded-t-[3px] bg-[#262a34]">
      <button type="button" className="flex h-7 items-center gap-1 pr-3 pl-[11px] text-[#6b6e75]">
        <NodeIcon />
        simple_transfer_demo
      </button>
      <div className="flex h-7 items-center border-t-2 border-[#5a94c8] bg-[#363d4a] px-[11px] pb-0.5">
        <button type="button" className="flex items-center gap-1 text-[#cdcfd2]">
          <NodeIcon />
          inventory_tutorial(*)
        </button>
        <button type="button" aria-label="Close tab" className="ml-2.5">
          <CloseIcon />
        </button>
      </div>
      <button type="button" aria-label="New scene" className="ml-2.5">
        <PlusIcon className="text-[#75767a]" />
      </button>
      <button type="button" aria-label="Distraction free mode" className="mr-1.5 ml-auto">
        <ExpandIcon />
      </button>
    </div>
  );
}

function BottomPanel() {
  const dot = <span className="size-2 rounded-full bg-[#ffdd65]" />;
  return (
    <footer className="mt-1 flex h-[41px] shrink-0 items-center rounded-[3px] bg-[#363d4a] px-0.5 text-[#bfc2c7]">
      <button type="button" className="flex items-center gap-1 px-2">{dot}Output</button>
      <button type="button" className="flex items-center gap-1 px-2 text-[#ffdd65]">{dot}Debugger (3)</button>
      <button type="button" className="px-2">Audio</button>
      <button type="button" className="px-2">Animation</button>
      <button type="button" className="px-2">Shader Editor</button>
      <button type="button" aria-label="Notifications" className="ml-auto">
        <BellIcon className="text-[#565b65]" />
      </button>
      <button type="button" className="ml-1 pr-[7px] pl-1.5 text-[#8b8f96]">4.4.1.stable</button>
    </footer>
  );
}

/* ---------- inspector ---------- */

function Inspector() {
  return (
    <section className="flex w-[428px] shrink-0 flex-col rounded-[3px] bg-[#363d4a]">
      <DockTabs tabs={["Inspector", "Node", "History"]} />
      <div className="flex min-h-0 flex-1 flex-col gap-1 p-1">
        <div className="flex h-7 items-start gap-1">
          <IconButton label="New resource"><NewResourceIcon /></IconButton>
          <IconButton label="Load resource"><OpenFolderIcon /></IconButton>
          <IconButton label="Save resource"><SaveIcon className="text-[#83868d]" /></IconButton>
          <IconButton label="Resource options"><DotsIcon /></IconButton>
          <IconButton label="Previous object" className="ml-auto w-5"><BackIcon /></IconButton>
          <IconButton label="Next object" className="w-5"><ForwardIcon className="text-[#7b7f87]" /></IconButton>
          <IconButton label="Object history"><HistoryIcon /></IconButton>
        </div>
        <div className="flex gap-1">
          <Field label="Object" muted disabled />
          <IconButton label="Open documentation"><DocIcon className="text-[#83868d]" /></IconButton>
        </div>
        <div className="flex gap-1">
          <Field label="Filter properties" placeholder="Filter Properties" search muted />
          <IconButton label="Property tools"><ToolsIcon className="text-[#83868d]" /></IconButton>
        </div>
        <div className="min-h-0 flex-1 rounded-[3px] bg-[#20262d]" />
      </div>
    </section>
  );
}

export default function App() {
  return (
    <div className="flex h-screen flex-col overflow-hidden bg-[#1d2229] font-['Noto_Sans',sans-serif] text-sm text-[#cdcfd2]">
      <TopBar />
      <main className="flex min-h-0 flex-1 gap-1 px-2 pb-2">
        <div className="flex w-[348px] shrink-0 flex-col gap-1">
          <SceneDock />
          <FileSystemDock />
        </div>
        <div className="flex min-w-0 flex-1 flex-col">
          <SceneTabs />
          <ViewportToolbar />
          <Viewport />
          <BottomPanel />
        </div>
        <Inspector />
      </main>
    </div>
  );
}
